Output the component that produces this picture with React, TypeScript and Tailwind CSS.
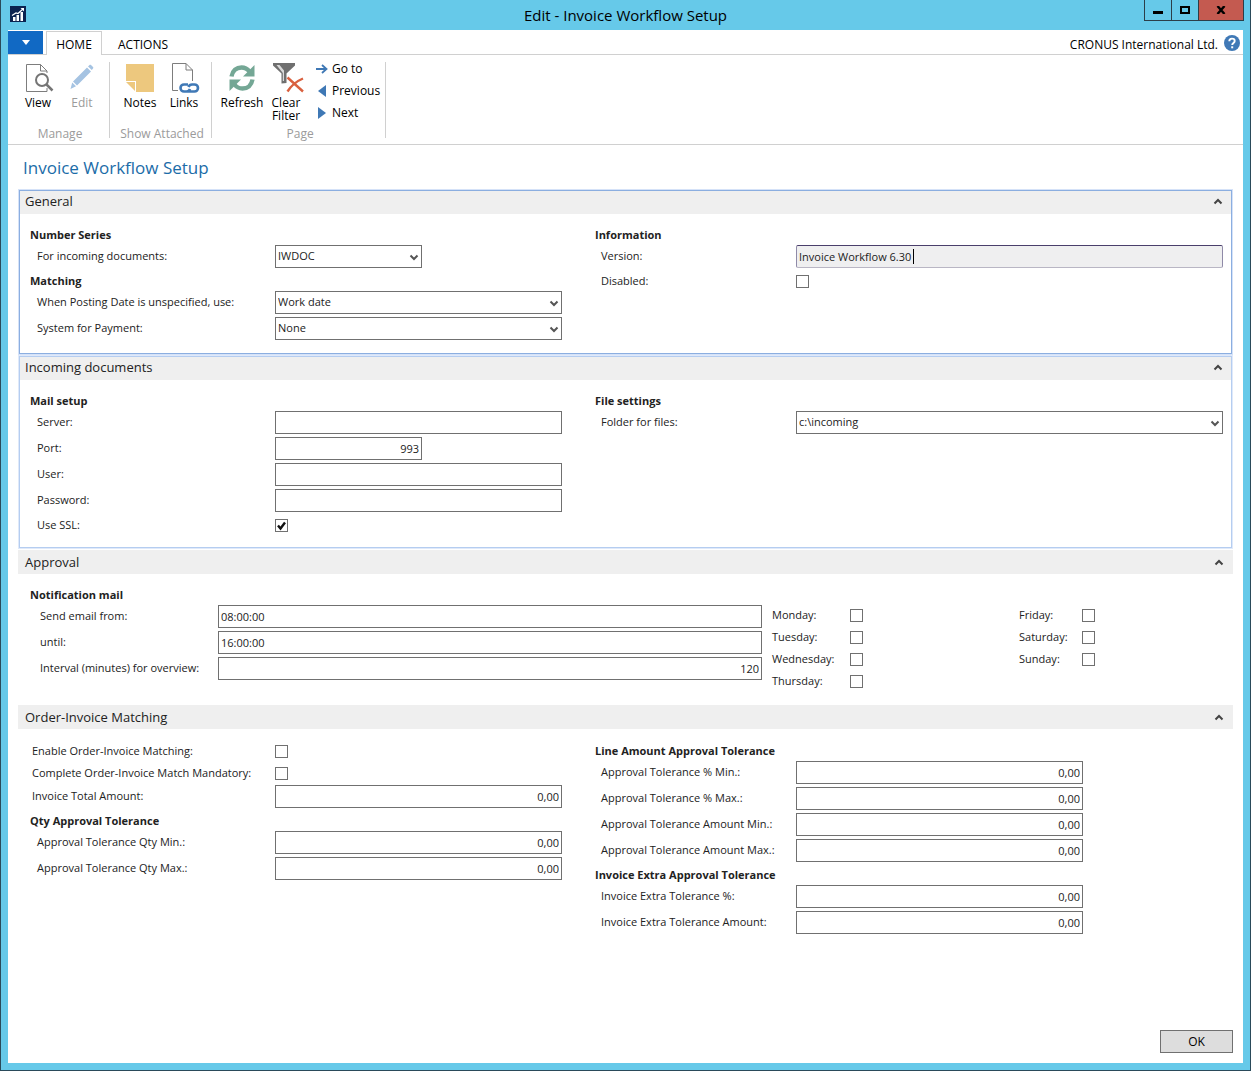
import { useId, type ReactNode } from "react";

/* ---------- ribbon icons ---------- */

function AppLogo() {
  return (
    <svg width="16" height="16" viewBox="0 0 16 16" aria-hidden="true">
      <rect width="16" height="16" fill="#0b2350" />
      <path d="M3 11h2.500v4H3zM6.500 9H9v6H6.500zM10.500 6H13v9h-2.500z" fill="#fff" />
      <path d="M2 9.500 6 7l2 .5L13 3" fill="none" stroke="#fff" strokeWidth="1.200" />
      <path d="M10.500 2H14v3.500z" fill="#fff" />
    </svg>
  );
}

function ViewIcon() {
  return (
    <svg width="32" height="30" viewBox="-3 0 32 30" fill="none" aria-hidden="true">
      <path d="M22 10V8l-6.500-6.500H1.500v27H22V25" stroke="#7d7d7d" />
      <path d="M15.500 1.500V8H22" stroke="#7d7d7d" />
      <circle cx="17" cy="17" r="6" fill="#fff" stroke="#757575" strokeWidth="2" />
      <path d="m21.500 21.500 6 6" stroke="#757575" strokeWidth="2.500" />
    </svg>
  );
}

function EditIcon() {
  return (
    <svg width="30" height="30" viewBox="0 0 30 30" fill="#a5c3e2" aria-hidden="true">
      <path d="M6 18.500 20 4.500l4 4-14 14zM21 3.500l1.500-1.500c.5-.5 1-.5 1.500 0l2 2c.5.5.5 1 0 1.500L24.800 7zM5.200 19.500l3.800 3.800L3.500 26z" />
    </svg>
  );
}

function NotesIcon() {
  return (
    <svg width="30" height="30" viewBox="0 0 30 30" aria-hidden="true">
      <path d="M1 1h28v28H11V18H1z" fill="#edc87e" />
      <path d="M1 19h9v9z" fill="#edc87e" />
    </svg>
  );
}

function LinksIcon() {
  return (
    <svg width="32" height="32" viewBox="0 0 32 32" fill="none" aria-hidden="true">
      <path d="M10 28.500H4.500v-27H18L24.500 8v11" stroke="#7d7d7d" />
      <path d="M18 1.500V8h6.500" stroke="#7d7d7d" />
      <path
        d="M20 22.500h-4a3.500 3.500 0 0 0 0 7h2.500c2 0 3-1 3.500-2.500M20.500 29.500h6a3.500 3.500 0 0 0 0-7H24c-2 0-3 1-3.500 2.500"
        stroke="#4079b6"
        strokeWidth="2.600"
      />
    </svg>
  );
}

function RefreshIcon() {
  return (
    <svg width="30" height="30" viewBox="0 0 30 30" aria-hidden="true">
      <path d="M4.500 13.500C5.500 7.500 9.500 4.500 14.500 4.500c3.500 0 6 1.500 8 4" fill="none" stroke="#74a795" strokeWidth="4.400" />
      <path d="M27.500 2v11.500H16z" fill="#74a795" />
      <path d="M25.500 16.500c-1 6-5 9-10 9-3.500 0-6-1.500-8-4" fill="none" stroke="#74a795" strokeWidth="4.400" />
      <path d="M2.500 28V16.500H14z" fill="#74a795" />
    </svg>
  );
}

function ClearFilterIcon() {
  return (
    <svg width="36" height="32" viewBox="-4 0 36 32" aria-hidden="true">
      <path d="M1 1h22v2.500l-8.500 8V21l-5 .500v-10L1 3.500z" fill="#6f6f6f" />
      <path d="M4.500 3h3l4.500 5.500V19h-1.200V11z" fill="#d9d9d9" />
      <path d="m15.500 15.500 15.500 14M31 16.500C25 19 19 24 15.500 29.500" fill="none" stroke="#d9603f" strokeWidth="2.400" />
    </svg>
  );
}

function GoToIcon() {
  return (
    <svg width="12" height="12" viewBox="0 0 12 12" fill="none" stroke="#3f78b5" strokeWidth="1.800" aria-hidden="true">
      <path d="M0 6h10.500M6 2l4.500 4L6 10" />
    </svg>
  );
}

function Triangle({ back = false }: { back?: boolean }) {
  return (
    <svg width="12" height="12" viewBox="0 0 12 12" fill="#3f78b5" aria-hidden="true">
      <path d={back ? "M10 0v12L2 6z" : "M2 0v12l8-6z"} />
    </svg>
  );
}

/* ---------- ribbon ---------- */

function RibbonButton({ icon, label, disabled }: { icon: ReactNode; label: string; disabled?: boolean }) {
  return (
    <button
      type="button"
      disabled={disabled}
      className="flex w-11 flex-col items-center gap-0.5 text-xs leading-[13px] text-black disabled:text-[#9b9b9b]"
    >
      <span className="flex h-8 items-center">{icon}</span>
      {label}
    </button>
  );
}

function SmallRibbonButton({ icon, label }: { icon: ReactNode; label: string }) {
  return (
    <button type="button" className="flex h-[22px] items-center gap-1 text-xs text-black">
      {icon}
      {label}
    </button>
  );
}

function RibbonGroup({ title, children }: { title: string; children: ReactNode }) {
  return (
    <div className="flex h-[76px] flex-col justify-between border-r border-[#d0d0d0] pr-[5px] pl-2">
      <div className="flex items-start">{children}</div>
      <p className="text-center text-xs leading-2 text-[#9b9b9b]">{title}</p>
    </div>
  );
}

/* ---------- fast tabs ---------- */

function FastTab({
  title,
  frame = "none",
  children,
}: {
  title: string;
  frame?: "none" | "active" | "hover";
  children: ReactNode;
}) {
  const frames = {
    none: "-mx-px",
    active: "border border-[#8baee0] outline outline-[#d5e2f8]",
    hover: "border border-[#b5cdf0] outline outline-[#dfe9fa]",
  };
  return (
    <section className={frames[frame]}>
      <h2>
        <button
          type="button"
          aria-expanded="true"
          className={`flex w-full items-center justify-between bg-[#efefef] text-[13px] text-[#222] ${
            frame === "none" ? "h-6 pt-px pr-[9px] pl-[7px]" : "h-[23px] pr-2 pb-px pl-[5px]"
          }`}
        >
          {title}
          <svg width="10" height="8" viewBox="0 0 10 8" fill="none" stroke="#444" strokeWidth="2" aria-hidden="true">
            <path d="M1.500 5.500 5 2l3.500 3.500" />
          </svg>
        </button>
      </h2>
      {children}
    </section>
  );
}

function GroupTitle({ children }: { children: ReactNode }) {
  return <h3 className="flex h-5 items-center pt-0.5 pl-[10px] text-[11px] font-bold text-[#222]">{children}</h3>;
}

const box = "h-[23px] w-full rounded-none border border-[#707070] bg-white px-0.5 text-[11px] text-[#222] outline-none";

interface FieldProps {
  label: string;
  value?: string;
  kind?: "text" | "number" | "password" | "select";
  labelClass?: string;
  boxClass?: string;
}

function Field({
  label,
  value = "",
  kind = "text",
  labelClass = "w-[255px] pl-[17px]",
  boxClass = "flex-1",
}: FieldProps) {
  const id = useId();
  return (
    <div className="flex h-[26px] items-center pb-px">
      <label htmlFor={id} className={`shrink-0 text-[11px] whitespace-nowrap text-[#222] ${labelClass}`}>
        {label}
      </label>
      <div className={`relative min-w-0 ${boxClass}`}>
        {kind === "select" ? (
          <>
            <select id={id} className={`${box} block appearance-none`}>
              <option>{value}</option>
            </select>
            <svg
              width="10"
              height="8"
              viewBox="0 0 10 8"
              fill="none"
              stroke="#555"
              strokeWidth="2"
              className="pointer-events-none absolute top-[9px] right-[3px]"
              aria-hidden="true"
            >
              <path d="M1.500 1.500 5 5l3.500-3.500" />
            </svg>
          </>
        ) : (
          <input
            id={id}
            type={kind === "password" ? "password" : "text"}
            defaultValue={value}
            className={`${box} block pb-px ${kind === "number" ? "text-right" : ""}`}
          />
        )}
      </div>
    </div>
  );
}

function Check({
  label,
  checked = false,
  labelClass = "w-[255px] pl-[17px]",
}: {
  label: string;
  checked?: boolean;
  labelClass?: string;
}) {
  const id = useId();
  return (
    <div className="flex h-[22px] items-center">
      <label htmlFor={id} className={`shrink-0 text-[11px] whitespace-nowrap text-[#222] ${labelClass}`}>
        {label}
      </label>
      <span className="relative flex">
        <input
          id={id}
          type="checkbox"
          defaultChecked={checked}
          className="peer size-[13px] appearance-none border border-[#707070] bg-white"
        />
        <svg
          viewBox="0 0 13 13"
          fill="none"
          stroke="#111"
          strokeWidth="2.400"
          className="pointer-events-none absolute inset-0 hidden size-[13px] peer-checked:block"
          aria-hidden="true"
        >
          <path d="m3 6.500 2.500 3L10 3.500" />
        </svg>
      </span>
    </div>
  );
}

// Label widths used by the right-hand and approval columns.
const rightLabel = "w-[211px] pl-4";
const sendLabel = "w-[200px] pl-[22px]";
const dayLabel = "w-[78px]";
const fridayLabel = "w-[63px]";

function VersionField() {
  return (
    <div className="flex h-[26px] items-center pb-px">
      <label htmlFor="version" className={`shrink-0 text-[11px] text-[#222] ${rightLabel}`}>
        Version:
      </label>
      <div className="relative min-w-0 flex-1">
        <input
          id="version"
          readOnly
          value="Invoice Workflow 6.30"
          className="block h-[23px] w-full rounded-xs border border-[#8f8aa8] border-t-[#4a3f6b] border-b-[#b9b6c4] bg-[#efeff0] px-0.5 pb-px text-[11px] text-[#222] outline-none"
        />
        {/* text caret */}
        <span className="absolute top-1 left-[117px] h-[15px] w-px bg-black" />
      </div>
    </div>
  );
}

export default function App() {
  return (
    <div className="flex min-h-screen flex-col border-x border-b border-[#2a4a5a] bg-[#66c9e9] px-[7px] pb-[7px] font-['Open_Sans','Noto_Sans',sans-serif]">
      <header className="grid h-[30px] grid-cols-[1fr_auto_1fr]">
        <div className="pt-[6px] pl-[2px]">
          <AppLogo />
        </div>
        <h1 className="pt-px text-[15px] leading-7 text-black">Edit - Invoice Workflow Setup</h1>
        <div className="-mr-px flex h-[21px] justify-end">
          <button type="button" aria-label="Minimize" className="flex w-7 justify-center border border-t-0 border-[#2c3e48] pt-[11px]">
            <span className="h-[3px] w-[10px] bg-black" />
          </button>
          <button type="button" aria-label="Maximize" className="flex w-[26px] justify-center border-b border-[#2c3e48] pt-[6px]">
            <span className="h-2 w-[10px] border-2 border-black" />
          </button>
          <button type="button" aria-label="Close" className="flex w-[46px] justify-center border border-t-0 border-[#2c3e48] bg-[#c45a50] pt-[6px]">
            <svg width="10" height="8" viewBox="0 0 10 8" stroke="#000" strokeWidth="2.400" aria-hidden="true">
              <path d="m1.500 0 7 8m0-8-7 8" />
            </svg>
          </button>
        </div>
      </header>

      <main className="flex flex-1 flex-col bg-white">
        <nav className="flex h-[25px] items-stretch border-b border-[#d0d0d0] text-xs text-black">
          <button type="button" aria-label="Application menu" className="mt-px flex w-[35px] items-center justify-center bg-[#1169c4]">
            <svg width="8" height="5" viewBox="0 0 8 5" fill="#fff" aria-hidden="true">
              <path d="M0 0h8L4 5z" />
            </svg>
          </button>
          <button type="button" className="mt-px -mb-px ml-[3px] w-14 border border-b-0 border-[#d0d0d0] bg-white pt-0.5">
            HOME
          </button>
          <button type="button" className="ml-4 pt-[5px]">
            ACTIONS
          </button>
          <span className="ml-auto flex items-center pt-[5px]">CRONUS International Ltd.</span>
          <button type="button" aria-label="Help" className="mr-[3px] ml-[6px] pt-0.5">
            <svg width="16" height="16" viewBox="0 0 16 16" fill="none" aria-hidden="true">
              <circle cx="8" cy="8" r="8" fill="#4079b6" />
              <path d="M5.300 6.200C5.300 2.700 10.700 2.900 10.700 6 10.700 8 8.200 7.900 8.200 10" stroke="#fff" strokeWidth="1.900" />
              <path d="M7.200 11.300h2v2h-2z" fill="#fff" />
            </svg>
          </button>
        </nav>

        <div className="flex h-[90px] items-start border-b border-[#d0d0d0] pt-[7px]">
          <RibbonGroup title="Manage">
            <RibbonButton icon={<ViewIcon />} label="View" />
            <RibbonButton icon={<EditIcon />} label="Edit" disabled />
          </RibbonGroup>
          <RibbonGroup title="Show Attached">
            <RibbonButton icon={<NotesIcon />} label="Notes" />
            <RibbonButton icon={<LinksIcon />} label="Links" />
          </RibbonGroup>
          <RibbonGroup title="Page">
            <RibbonButton icon={<RefreshIcon />} label="Refresh" />
            <RibbonButton icon={<ClearFilterIcon />} label="Clear Filter" />
            <div className="-mt-1 ml-2 flex flex-col">
              <SmallRibbonButton icon={<GoToIcon />} label="Go to" />
              <SmallRibbonButton icon={<Triangle back />} label="Previous" />
              <SmallRibbonButton icon={<Triangle />} label="Next" />
            </div>
          </RibbonGroup>
        </div>

        <h1 className="flex h-[45px] items-center pl-[15px] text-[17px] text-[#1b6ca8]">Invoice Workflow Setup</h1>

        <div className="flex flex-col px-[11px]">
          <FastTab title="General" frame="active">
            <div className="grid grid-cols-[565fr_646fr] pt-[10px] pb-[11px]">
              <div className="pr-[23px]">
                <GroupTitle>Number Series</GroupTitle>
                <Field label="For incoming documents:" value="IWDOC" kind="select" boxClass="w-[147px]" />
                <GroupTitle>Matching</GroupTitle>
                <Field label="When Posting Date is unspecified, use:" value="Work date" kind="select" />
                <Field label="System for Payment:" value="None" kind="select" />
              </div>
              <div className="pr-2">
                <GroupTitle>Information</GroupTitle>
                <VersionField />
                <Check label="Disabled:" labelClass={rightLabel} />
              </div>
            </div>
          </FastTab>

          <div className="mt-[2px]">
            <FastTab title="Incoming documents" frame="hover">
              <div className="grid grid-cols-[565fr_646fr] pt-[10px] pb-[11px]">
                <div className="pr-[23px]">
                  <GroupTitle>Mail setup</GroupTitle>
                  <Field label="Server:" />
                  <Field label="Port:" value="993" kind="number" boxClass="w-[147px]" />
                  <Field label="User:" />
                  <Field label="Password:" kind="password" />
                  <Check label="Use SSL:" checked />
                </div>
                <div className="pr-2">
                  <GroupTitle>File settings</GroupTitle>
                  <Field label="Folder for files:" value="c:\incoming" kind="select" labelClass={rightLabel} />
                </div>
              </div>
            </FastTab>
          </div>

          <div className="mt-[2px]">
            <FastTab title="Approval">
              <div className="grid grid-cols-[754fr_247fr_214fr] pt-[10px] pb-[13px]">
                <div className="pr-[10px]">
                  <div className="pl-0.5">
                    <GroupTitle>Notification mail</GroupTitle>
                  </div>
                  <Field label="Send email from:" value="08:00:00" labelClass={sendLabel} />
                  <Field label="until:" value="16:00:00" labelClass={sendLabel} />
                  <Field label="Interval (minutes) for overview:" value="120" kind="number" labelClass={sendLabel} />
                </div>
                <div className="pt-5">
                  <Check label="Monday:" labelClass={dayLabel} />
                  <Check label="Tuesday:" labelClass={dayLabel} />
                  <Check label="Wednesday:" labelClass={dayLabel} />
                  <Check label="Thursday:" labelClass={dayLabel} />
                </div>
                <div className="pt-5">
                  <Check label="Friday:" labelClass={fridayLabel} />
                  <Check label="Saturday:" labelClass={fridayLabel} />
                  <Check label="Sunday:" labelClass={fridayLabel} />
                </div>
              </div>
            </FastTab>
          </div>

          <FastTab title="Order-Invoice Matching">
            <div className="grid grid-cols-[565fr_646fr] px-0.5 pt-[11px]">
              <div className="pr-[23px]">
                <Check label="Enable Order-Invoice Matching:" labelClass="w-[255px] pl-3" />
                <Check label="Complete Order-Invoice Match Mandatory:" labelClass="w-[255px] pl-3" />
                <Field label="Invoice Total Amount:" value="0,00" kind="number" labelClass="w-[255px] pl-3" />
                <GroupTitle>Qty Approval Tolerance</GroupTitle>
                <Field label="Approval Tolerance Qty Min.:" value="0,00" kind="number" />
                <Field label="Approval Tolerance Qty Max.:" value="0,00" kind="number" />
              </div>
              <div className="pr-[148px]">
                <GroupTitle>Line Amount Approval Tolerance</GroupTitle>
                <Field label="Approval Tolerance % Min.:" value="0,00" kind="number" labelClass={rightLabel} />
                <Field label="Approval Tolerance % Max.:" value="0,00" kind="number" labelClass={rightLabel} />
                <Field label="Approval Tolerance Amount Min.:" value="0,00" kind="number" labelClass={rightLabel} />
                <Field label="Approval Tolerance Amount Max.:" value="0,00" kind="number" labelClass={rightLabel} />
                <GroupTitle>Invoice Extra Approval Tolerance</GroupTitle>
                <Field label="Invoice Extra Tolerance %:" value="0,00" kind="number" labelClass={rightLabel} />
                <Field label="Invoice Extra Tolerance Amount:" value="0,00" kind="number" labelClass={rightLabel} />
              </div>
            </div>
          </FastTab>
        </div>

        <footer className="mt-auto flex justify-end p-[10px]">
          <button type="button" className="h-[23px] w-[73px] border border-[#707070] bg-[#dddddd] text-xs text-black">
            OK
          </button>
        </footer>
      </main>
    </div>
  );
}
